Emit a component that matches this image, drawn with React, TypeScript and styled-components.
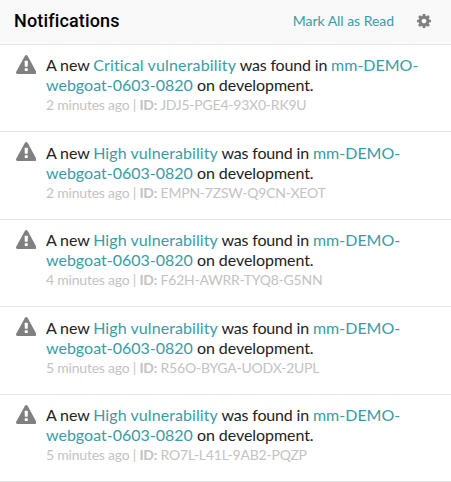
import React from "react";
import styled, { createGlobalStyle } from "styled-components";

const GlobalStyle = createGlobalStyle`
  * { box-sizing: border-box; }
  html, body { margin: 0; padding: 0; background: #fff; overflow: hidden; }
`;

const Panel = styled.section`
  width: 451px;
  height: 482px;
  overflow: hidden;
  background: #fff;
  color: #222;
  font-family: Lato, sans-serif;
`;

const Header = styled.header`
  display: flex;
  align-items: center;
  height: 45px;
  padding: 0 20px 3px 14px;
  background: #f9f9f9;
  border-bottom: 1px solid #e7e7e7;
`;

const Title = styled.h1`
  flex: 1;
  margin: 0;
  color: #000;
  font: 500 18px/20px Roboto, sans-serif;
  letter-spacing: 0.15px;
`;

const MarkRead = styled.a`
  margin-right: 23px;
  color: #389da6;
  font-size: 14px;
  line-height: 20px;
  letter-spacing: -0.04px;
`;

const Gear = styled.svg`
  width: 14px;
  height: 14px;
  fill: #808080;
`;

const List = styled.ul`
  margin: 0;
  padding: 0;
  list-style: none;
`;

const Item = styled.li`
  display: flex;
  height: 87.4px;
  padding: 10.35px 20px 0 15.5px;
  border-bottom: 1px solid #e4e4e4;
`;

const Warning = styled.svg`
  flex: none;
  width: 20.5px;
  height: 19px;
  margin: -0.35px 10px 0 0;
  fill: #808080;
`;

const Body = styled.div`
  flex: 1;
  min-width: 0;
`;

const Message = styled.p`
  margin: 0;
  font-size: 16px;
  line-height: 20px;
  white-space: nowrap;
`;

const Text = styled.span<{ $tracking?: number }>`
  letter-spacing: ${({ $tracking = 0 }) => $tracking}px;
`;

const Link = styled.a<{ $tracking?: number }>`
  color: #389da6;
  letter-spacing: ${({ $tracking = 0 }) => $tracking}px;
`;

const Meta = styled.div`
  color: #c3c3c3;
  font-size: 14px;
  line-height: 19px;
  letter-spacing: -0.22px;
`;

const notifications = [
  { severity: "Critical", time: "2 minutes ago", id: "JDJ5-PGE4-93X0-RK9U" },
  { severity: "High", time: "2 minutes ago", id: "EMPN-7ZSW-Q9CN-XEOT" },
  { severity: "High", time: "4 minutes ago", id: "F62H-AWRR-TYQ8-G5NN" },
  { severity: "High", time: "5 minutes ago", id: "R56O-BYGA-UODX-2UPL" },
  { severity: "High", time: "5 minutes ago", id: "RO7L-L41L-9AB2-PQZP" },
];

export default function App() {
  return (
    <>
      <GlobalStyle />
      <Panel>
        <Header>
          <Title>Notifications</Title>
          <MarkRead>Mark All as Read</MarkRead>
          <Gear viewBox="0 128 1536 1536" aria-label="Settings">
            <path d="M1024 896q0-106-75-181t-181-75-181 75-75 181 75 181 181 75 181-75 75-181zm512-109v222q0 12-8 23t-20 13l-185 28q-19 54-39 91 35 50 107 138 10 12 10 25t-9 23q-27 37-99 108t-94 71q-12 0-26-9l-138-108q-44 23-91 38-16 136-29 186-7 28-36 28h-222q-14 0-24.5-8.5t-11.5-21.5l-28-184q-49-16-90-37l-141 107q-10 9-25 9-14 0-25-11-126-114-165-168-7-10-7-23 0-12 8-23 15-21 51-66.5t54-70.5q-27-50-41-99l-183-27q-13-2-21-12.5t-8-23.5v-222q0-12 8-23t19-13l186-28q14-46 39-92-40-57-107-138-10-12-10-24 0-10 9-23 26-36 98.5-107.5t94.5-71.5q13 0 26 10l138 107q44-23 91-38 16-136 29-186 7-28 36-28h222q14 0 24.5 8.5t11.5 21.5l28 184q49 16 90 37l142-107q9-9 24-9 13 0 25 10 129 119 165 170 7 8 7 22 0 12-8 23-15 21-51 66.5t-54 70.5q26 50 41 98l183 28q13 2 21 12.5t8 23.5z" />
          </Gear>
        </Header>
        <List>
          {notifications.map((n) => (
            <Item key={n.id}>
              <Warning viewBox="0 0 1792 1664" aria-label="Warning">
                <path d="M1024 1375v-190q0-14-9.5-23.5t-22.5-9.5h-192q-13 0-22.5 9.5t-9.5 23.5v190q0 14 9.5 23.5t22.5 9.5h192q13 0 22.5-9.5t9.5-23.5zm-2-374l18-459q0-12-10-19-13-11-24-11h-220q-11 0-24 11-10 7-10 21l17 457q0 10 10 16.5t24 6.5h185q14 0 23.5-6.5t10.5-16.5zm-14-934l768 1408q35 63-2 126-17 29-46.5 46t-63.5 17h-1536q-34 0-63.5-17t-46.5-46q-37-63-2-126l768-1408q17-31 47-49t65-18 65 18 47 49z" />
              </Warning>
              <Body>
                <Message>
                  <Text $tracking={-0.14}>A new </Text>
                  <Link $tracking={n.severity === "Critical" ? 0.16 : 0.08}>
                    {n.severity} vulnerability
                  </Link>
                  <Text $tracking={-0.17}> was found in </Text>
                  <Link>
                    mm-DEMO-
                    <br />
                    webgoat-0603-0820
                  </Link>
                  <Text $tracking={-0.06}> on development.</Text>
                </Message>
                <Meta>
                  {n.time} | <b>ID:</b> {n.id}
                </Meta>
              </Body>
            </Item>
          ))}
        </List>
      </Panel>
    </>
  );
}
